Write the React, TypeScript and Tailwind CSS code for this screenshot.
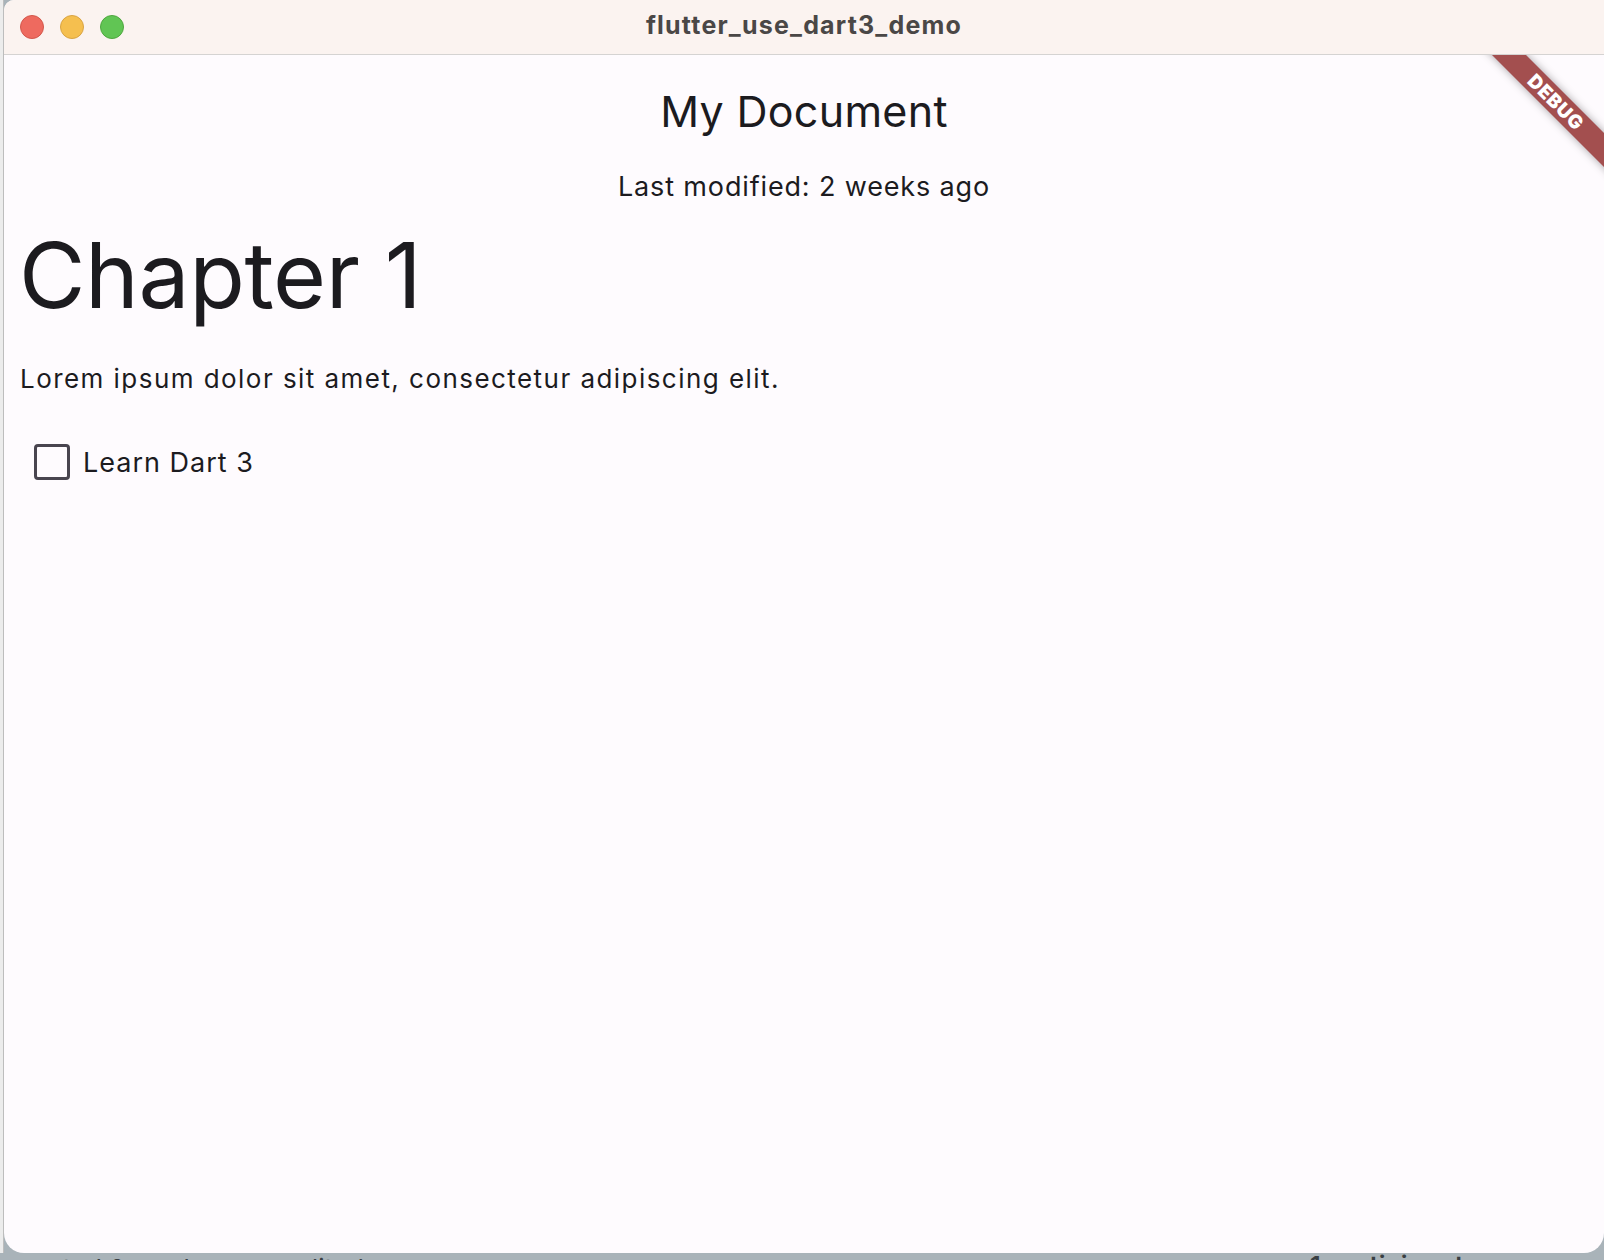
import { useState } from "react";

const sans = "font-['Inter','Noto_Sans',sans-serif]";

function TrafficLights() {
  return (
    <div className="flex items-center gap-[16px] pl-[16px]">
      <span className="block h-[24px] w-[24px] rounded-full border border-[#d3574b] bg-[#ee6a5f]" />
      <span className="block h-[24px] w-[24px] rounded-full border border-[#d9a443] bg-[#f5bf4f]" />
      <span className="block h-[24px] w-[24px] rounded-full border border-[#4fa73f] bg-[#61c554]" />
    </div>
  );
}

function DebugBanner() {
  return (
    <div className="pointer-events-none absolute left-[1452px] top-[35px] flex h-[24px] w-[200px] rotate-45 items-center justify-center bg-[#a34f4f] shadow-[0_0_8px_rgba(0,0,0,0.35)]">
      <span className={`${sans} text-[19px] font-black leading-none tracking-[0.8px] text-white`}>
        DEBUG
      </span>
    </div>
  );
}

export default function App() {
  const [checked, setChecked] = useState(false);

  return (
    <div className={`${sans} flex h-[1260px] w-[1604px] flex-col overflow-hidden bg-[#a9b3b9]`}>
      <div className="flex h-[1253px]">
        <div className="w-[4px] border-r border-[#bdbdbd] bg-[#ececec]" />
        <div className="flex w-[1600px] flex-col overflow-hidden rounded-tl-[10px] rounded-b-[20px] bg-[#fefbfe]">
          {/* title bar */}
          <div className="relative flex h-[55px] shrink-0 items-center border-b border-[#d5d3d2] bg-[#fbf3f0]">
            <TrafficLights />
            <div className="absolute inset-x-0 top-0 flex h-[52px] items-center justify-center">
              <span className={`${sans} text-[25px] font-bold tracking-[1.2px] text-[#4a4746]`}>flutter_use_dart3_demo</span>
            </div>
          </div>

          {/* content */}
          <div className="relative flex-1 overflow-hidden">
            <DebugBanner />
            <div className="flex flex-col px-[15px] text-[#1c1b1f]">
              <h1 className="mt-[30px] text-center text-[43px] font-normal leading-[52px] tracking-[0.3px]">My Document</h1>
              <p className="mt-[33px] text-center text-[27px] leading-[33px] tracking-[0.85px]">Last modified: 2 weeks ago</p>
              <h2 className="mt-[17px] text-[91px] font-normal leading-[110px] tracking-[-0.4px]">Chapter 1</h2>
              <p className="mt-[33px] pl-[1px] text-[26px] leading-[32px] tracking-[1.45px]">
                Lorem ipsum dolor sit amet, consectetur adipiscing elit.
              </p>
              <label className="mt-[49px] flex h-[36px] cursor-pointer items-center gap-[13px] pl-[15px]">
                <button
                  type="button"
                  onClick={() => setChecked(!checked)}
                  className="h-[36px] w-[36px] rounded-[4px] border-[3.5px] border-[#49454f] bg-transparent"
                />
                <span className="text-[27px] leading-[33px] tracking-[1px]">Learn Dart 3</span>
              </label>
            </div>
          </div>
        </div>
      </div>
      <div className="relative flex h-[7px] items-start overflow-hidden text-[#3a3f43]">
        <span className="-ml-[6px] mt-[1px] whitespace-nowrap text-[26px] leading-[30px]">umented 2 weeks ago · edited</span>
        <span className="ml-auto mr-[140px] mt-[-2px] whitespace-nowrap text-[26px] font-semibold leading-[30px]">1 participant</span>
      </div>
    </div>
  );
}
